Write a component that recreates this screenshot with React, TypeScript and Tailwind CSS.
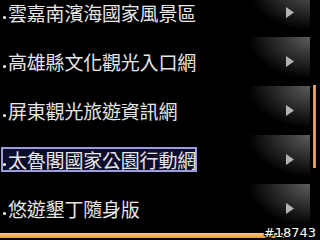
import React from "react";

const items = [
  "雲嘉南濱海國家風景區",
  "高雄縣文化觀光入口網",
  "屏東觀光旅遊資訊網",
  "太魯閣國家公園行動網",
  "悠遊墾丁隨身版",
];

const SELECTED = 3;

function Arrow() {
  return (
    <svg width="8" height="11" viewBox="0 0 8 11">
      <polygon points="0,0 8,5.5 0,11" fill="#b4b4b4" />
    </svg>
  );
}

export default function App() {
  return (
    <div
      className="relative flex h-[240px] w-[320px] flex-col overflow-hidden bg-black text-[#e6e6e6]"
      style={{ fontFamily: '"Noto Sans CJK TC", "Noto Sans CJK SC", sans-serif' }}
    >
      <div className="h-[226px] overflow-hidden">
        <div className="-mt-[12px] flex flex-col">
          {items.map((name, i) => (
            <div key={name} className="flex h-[49px] items-center">
              <div
                className={
                  i === SELECTED
                    ? "ml-[1px] flex h-[25px] w-[196px] items-center border-2 border-[#9c9ce0] bg-[#0c0c2c]"
                    : "ml-[1px] flex h-[25px] w-[196px] items-center border-2 border-transparent"
                }
              >
                <span className="mt-[10px] h-[3px] w-[3px] shrink-0 rounded-full bg-white" />
                <span className="ml-[2px] whitespace-nowrap text-[19px] leading-none tracking-[-0.2px]">
                  {name}
                </span>
              </div>
              <div className="ml-auto mr-[10px] flex h-[48px] w-[60px] items-center justify-end self-start bg-[radial-gradient(62px_42px_at_100%_0%,#5c5c5c,#000)] pr-[16px]">
                <Arrow />
              </div>
            </div>
          ))}
        </div>
      </div>

      {/* scrollbar */}
      <div className="absolute right-[4px] top-[85px] h-[83px] w-[3px] bg-[linear-gradient(to_right,#c47a32,#f4b868,#c47a32)]" />

      <div className="relative h-[14px]">
        <div className="absolute bottom-[2px] left-0 h-[5px] w-[290px] bg-[linear-gradient(to_bottom,#f8c884,#e49a48)]" />
        <span
          className="absolute bottom-[1px] right-[4px] text-[13px] leading-none text-white"
          style={{
            fontFamily: '"DejaVu Sans", sans-serif',
            textShadow:
              "1px 0 #000, -1px 0 #000, 0 1px #000, 0 -1px #000, 1px 1px #000, -1px -1px #000, 1px -1px #000, -1px 1px #000",
          }}
        >
          #18743
        </span>
      </div>
    </div>
  );
}
